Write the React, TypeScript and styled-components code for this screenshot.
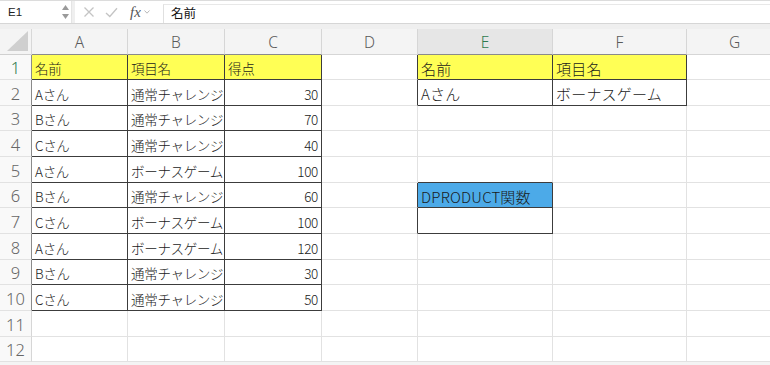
import React from "react";
import styled, { createGlobalStyle } from "styled-components";

const GlobalStyle = createGlobalStyle`
  html, body { margin: 0; padding: 0; background: #ffffff; overflow: hidden; }
  body { font-family: "Noto Sans CJK JP", "Noto Sans", sans-serif; }
`;

const Page = styled.div`
  width: 770px;
  height: 365px;
  overflow: hidden;
  background: #f4f4f4;
  display: flex;
  flex-direction: column;
`;

const TopBar = styled.div`
  height: 29px;
  box-sizing: border-box;
  border-top: 1px solid #dcdcdc;
  background: #efefef;
  display: flex;
  flex-direction: column;
`;

const BarRow = styled.div`
  height: 23px;
  box-sizing: border-box;
  background: #ffffff;
  border-bottom: 1px solid #d6d6d6;
  display: flex;
  align-items: stretch;
`;

const NameBox = styled.div`
  width: 72px;
  box-sizing: border-box;
  display: flex;
  align-items: center;
  justify-content: space-between;
  padding: 0 2px 0 8px;
  font-family: "Liberation Sans", sans-serif;
  font-size: 11.5px;
  color: #222;
  border-right: 1px solid #e4e4e4;
`;

const Spinner = styled.div`
  display: flex;
  flex-direction: column;
  gap: 4px;
  align-items: center;
`;

const Divider = styled.div`
  width: 3px;
  background: #efefef;
`;

const Controls = styled.div`
  width: 80px;
  display: flex;
  align-items: center;
  padding-left: 8px;
  gap: 10px;
`;

const Fx = styled.span`
  font-family: "Liberation Serif", serif;
  font-style: italic;
  font-size: 15px;
  color: #555;
  margin-left: 2px;
  display: flex;
  align-items: center;
  gap: 3px;
`;

const FormulaInput = styled.div`
  flex: 1;
  border-left: 1px solid #e0e0e0;
  border-top: 1px solid #e8e8e8;
  margin-top: 3px;
  display: flex;
  align-items: center;
  padding-left: 7px;
  padding-bottom: 3px;
  font-size: 12.5px;
  color: #111;
`;

const Sheet = styled.div`
  display: grid;
  grid-template-columns: 32px 96px 97px 97px 96px 135px 134px 96px;
  grid-template-rows: 26px 25px 26px 25px 26px 26px 25px 26px 26px 25px 26px 26px 25px;
  width: 783px;
  background: #ffffff;
`;

const Cell = styled.div<{
  $right: string;
  $bottom: string;
  $fill?: string;
  $align?: "left" | "right";
  $wide?: boolean;
}>`
  box-sizing: border-box;
  border-right: 1px solid ${(p) => p.$right};
  border-bottom: 1px solid ${(p) => p.$bottom};
  background: ${(p) => p.$fill || "#ffffff"};
  display: flex;
  align-items: center;
  justify-content: ${(p) => (p.$align === "right" ? "flex-end" : "flex-start")};
  padding: 2px 3px 0 3px;
  overflow: hidden;
  white-space: nowrap;
  font-size: ${(p) => (p.$wide ? "15px" : "13.5px")};
  font-weight: 300;
  letter-spacing: ${(p) => (p.$wide ? "0.2px" : "-0.3px")};
  color: #1a1a1a;
`;

const ColHead = styled.div<{ $right: string; $bottom: string; $active?: boolean }>`
  box-sizing: border-box;
  border-right: 1px solid ${(p) => p.$right};
  border-bottom: 1px solid ${(p) => p.$bottom};
  background: ${(p) => (p.$active ? "#e6e6e6" : "#f4f4f4")};
  display: flex;
  align-items: center;
  justify-content: center;
  font-family: "Noto Sans", sans-serif;
  font-weight: 300;
  font-size: 15.5px;
  color: ${(p) => (p.$active ? "#2f7a4f" : "#5a5a5a")};
  padding-top: 1px;
`;

const RowHead = styled.div<{ $right: string; $bottom: string; $active?: boolean }>`
  box-sizing: border-box;
  border-right: 1px solid ${(p) => p.$right};
  border-bottom: 1px solid ${(p) => p.$bottom};
  background: #f9f9f9;
  display: flex;
  align-items: center;
  justify-content: center;
  font-family: "Noto Sans", sans-serif;
  font-weight: 300;
  font-size: 16.5px;
  color: ${(p) => (p.$active ? "#2f7a4f" : "#666666")};
  padding-top: 1px;
`;

const Corner = styled.div`
  box-sizing: border-box;
  border-right: 1px solid #d8d8d8;
  border-bottom: 1px solid #d0d0d0;
  background: #f4f4f4;
  display: flex;
  align-items: flex-end;
  justify-content: flex-end;
  padding: 0 3px 3px 0;
`;

const YELLOW = "#ffff55";
const BLUE = "#4caae8";
const GRID = "#e2e2e2";
const DARK = "#3c3c3c";
const HEAD_LINE = "#d6d6d6";

type CellData = { text?: string; fill?: string; align?: "left" | "right"; wide?: boolean };

const letters = ["A", "B", "C", "D", "E", "F", "G"];

const tableRows: [string, string, string][] = [
  ["名前", "項目名", "得点"],
  ["Aさん", "通常チャレンジ", "30"],
  ["Bさん", "通常チャレンジ", "70"],
  ["Cさん", "通常チャレンジ", "40"],
  ["Aさん", "ボーナスゲーム", "100"],
  ["Bさん", "通常チャレンジ", "60"],
  ["Cさん", "ボーナスゲーム", "100"],
  ["Aさん", "ボーナスゲーム", "120"],
  ["Bさん", "通常チャレンジ", "30"],
  ["Cさん", "通常チャレンジ", "50"],
];

const ranges = [
  { c1: 1, c2: 3, r1: 1, r2: 10 },
  { c1: 5, c2: 6, r1: 1, r2: 2 },
  { c1: 5, c2: 5, r1: 6, r2: 7 },
];

const inRange = (c: number, r: number) =>
  ranges.some((g) => c >= g.c1 && c <= g.c2 && r >= g.r1 && r <= g.r2);

function cellAt(c: number, r: number): CellData {
  if (c >= 1 && c <= 3 && r >= 1 && r <= 10) {
    const t = tableRows[r - 1][c - 1];
    return {
      text: t,
      fill: r === 1 ? YELLOW : undefined,
      align: c === 3 && r > 1 ? "right" : "left",
    };
  }
  if (r === 1 && c === 5) return { text: "名前", fill: YELLOW, wide: true };
  if (r === 1 && c === 6) return { text: "項目名", fill: YELLOW, wide: true };
  if (r === 2 && c === 5) return { text: "Aさん", wide: true };
  if (r === 2 && c === 6) return { text: "ボーナスゲーム", wide: true };
  if (r === 6 && c === 5) return { text: "DPRODUCT関数", fill: BLUE, wide: true };
  return {};
}

const Triangle = () => (
  <svg width="21" height="20" viewBox="0 0 21 20">
    <polygon points="21,0 21,20 0,20" fill="#cfcfcf" />
  </svg>
);

const Arrows = () => (
  <Spinner>
    <svg width="7" height="5" viewBox="0 0 7 5">
      <polygon points="3.5,0 7,5 0,5" fill="#9a9a9a" />
    </svg>
    <svg width="7" height="5" viewBox="0 0 7 5">
      <polygon points="0,0 7,0 3.5,5" fill="#9a9a9a" />
    </svg>
  </Spinner>
);

const CrossIcon = () => (
  <svg width="12" height="12" viewBox="0 0 12 12">
    <path d="M1.5 1.5 L10.5 10.5 M10.5 1.5 L1.5 10.5" stroke="#c4c4c4" strokeWidth="1.3" fill="none" />
  </svg>
);

const CheckIcon = () => (
  <svg width="13" height="11" viewBox="0 0 13 11">
    <path d="M1 6 L4.8 9.5 L12 1.2" stroke="#c4c4c4" strokeWidth="1.3" fill="none" />
  </svg>
);

const Chevron = () => (
  <svg width="6" height="4" viewBox="0 0 6 4">
    <path d="M0.5 0.5 L3 3.2 L5.5 0.5" stroke="#b0b0b0" strokeWidth="0.9" fill="none" />
  </svg>
);

export default function App() {
  const cells: React.ReactNode[] = [];
  for (let r = 0; r <= 12; r++) {
    for (let c = 0; c <= 7; c++) {
      const key = `${c}-${r}`;
      const darkRight = inRange(c, r) || inRange(c + 1, r);
      const darkBottom = inRange(c, r) || inRange(c, r + 1);
      if (r === 0 && c === 0) {
        cells.push(
          <Corner key={key}>
            <Triangle />
          </Corner>
        );
      } else if (r === 0) {
        cells.push(
          <ColHead
            key={key}
            $right={HEAD_LINE}
            $bottom={darkBottom ? "#8a8a8a" : HEAD_LINE}
            $active={c === 5}
          >
            {letters[c - 1]}
          </ColHead>
        );
      } else if (c === 0) {
        cells.push(
          <RowHead
            key={key}
            $right={darkRight ? "#8a8a8a" : HEAD_LINE}
            $bottom={GRID}
            $active={r === 1}
          >
            {r}
          </RowHead>
        );
      } else {
        const d = cellAt(c, r);
        cells.push(
          <Cell
            key={key}
            $right={darkRight ? DARK : GRID}
            $bottom={darkBottom ? DARK : GRID}
            $fill={d.fill}
            $align={d.align}
            $wide={d.wide}
          >
            {d.text}
          </Cell>
        );
      }
    }
  }

  return (
    <>
      <GlobalStyle />
      <Page>
        <TopBar>
          <BarRow>
            <NameBox>
              <span>E1</span>
              <Arrows />
            </NameBox>
            <Divider />
            <Controls>
              <CrossIcon />
              <CheckIcon />
              <Fx>
                fx
                <Chevron />
              </Fx>
            </Controls>
            <FormulaInput>名前</FormulaInput>
          </BarRow>
        </TopBar>
        <Sheet>{cells}</Sheet>
      </Page>
    </>
  );
}
